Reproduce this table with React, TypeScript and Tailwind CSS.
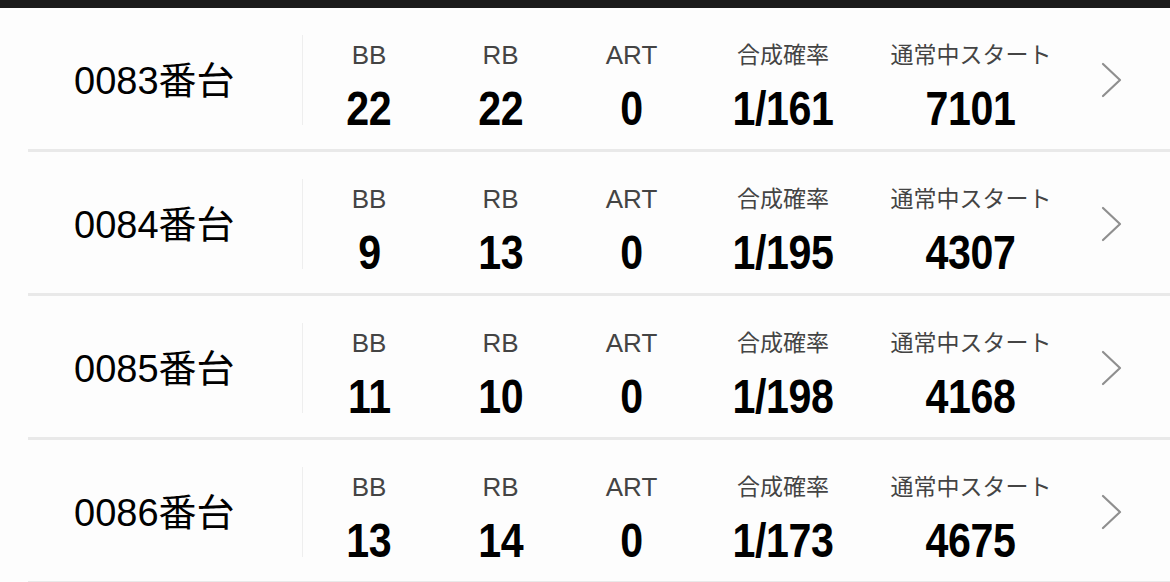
type Row = {
  no: string;
  bb: number;
  rb: number;
  art: number;
  prob: string;
  start: number;
};

const rows: Row[] = [
  { no: "0083", bb: 22, rb: 22, art: 0, prob: "1/161", start: 7101 },
  { no: "0084", bb: 9, rb: 13, art: 0, prob: "1/195", start: 4307 },
  { no: "0085", bb: 11, rb: 10, art: 0, prob: "1/198", start: 4168 },
  { no: "0086", bb: 13, rb: 14, art: 0, prob: "1/173", start: 4675 },
];

const labelFont = {
  fontFamily: '"Liberation Sans", "Noto Sans CJK JP", sans-serif',
};
const numFont = {
  fontFamily: '"Liberation Sans Narrow", "Liberation Sans", sans-serif',
};

function Stat({
  label,
  value,
  width,
  cjk,
}: {
  label: string;
  value: string | number;
  width: string;
  cjk?: boolean;
}) {
  return (
    <div className={`${width} flex flex-col items-center shrink-0`}>
      <span
        className={`${cjk ? "text-[23px]" : "text-[26px]"} leading-none text-[#444444] h-[28px] flex items-center`}
        style={labelFont}
      >
        {label}
      </span>
      <span
        className="mt-[15px] inline-block text-[49px] leading-none font-bold text-black scale-x-[0.84] tracking-[-0.5px]"
        style={numFont}
      >
        {value}
      </span>
    </div>
  );
}

export default function App() {
  return (
    <div className="w-[1170px] h-[582px] bg-[#fdfdfd] overflow-hidden">
      <div className="h-[8px] bg-[#1b1b1b]" />
      {rows.map((r) => (
        <div key={r.no} className="pl-[28px]">
          <div className="h-[144px] pb-[3px] flex items-center border-b-[3px] border-[#e9e9e9]">
            <div
              className="w-[274px] shrink-0 pl-[46px] pt-[8px] text-[38px] text-black"
              style={{ fontFamily: '"Liberation Sans", "Noto Sans CJK JP", sans-serif' }}
            >
              {r.no}番台
            </div>
            <div className="w-px h-[90px] bg-[#eeeeee] shrink-0 mt-[6px]" />
            <div className="flex items-start pt-[20px]">
              <Stat label="BB" value={r.bb} width="w-[132px]" />
              <Stat label="RB" value={r.rb} width="w-[131px]" />
              <Stat label="ART" value={r.art} width="w-[131px]" />
              <Stat label="合成確率" value={r.prob} width="w-[172px]" cjk />
              <Stat label="通常中スタート" value={r.start} width="w-[204px]" cjk />
            </div>
            <div className="ml-[28px] mt-[6px] flex items-center">
              <svg width="22" height="36" viewBox="0 0 22 36" fill="none">
                <polyline points="2,2 19,18 2,34" stroke="#8f8f8f" strokeWidth="2.2" strokeLinecap="round" strokeLinejoin="round" />
              </svg>
            </div>
          </div>
        </div>
      ))}
    </div>
  );
}
